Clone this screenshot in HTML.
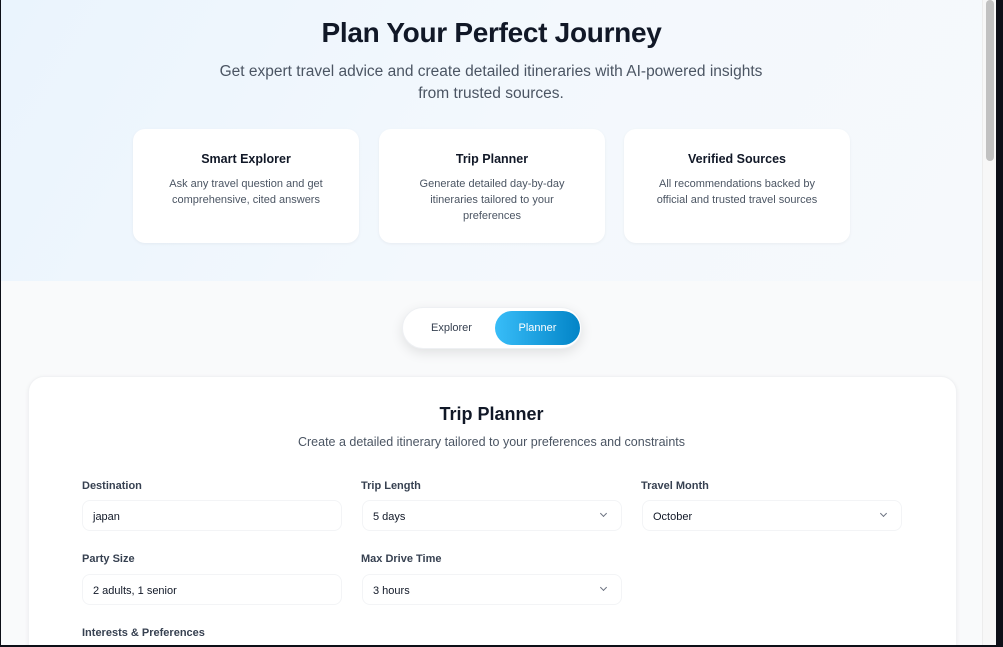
<!DOCTYPE html>
<html><head><style>
*{box-sizing:border-box;margin:0;padding:0}
body{width:1003px;height:647px;overflow:hidden;font-family:"Liberation Sans",sans-serif;background:#0d0f17;position:relative}
.page{position:absolute;left:1px;top:0;width:981px;height:645px;background:#f9fafb;overflow:hidden}
.hero{position:absolute;left:0;top:0;width:981px;height:281px;background:linear-gradient(120deg,#eaf4fd 0%,#f3f8fd 50%,#f6f9fc 100%)}
h1{position:absolute;top:17px;width:981px;text-align:center;font-size:28px;font-weight:700;color:#111827;letter-spacing:-0.3px}
.sub{position:absolute;top:61px;left:205px;width:570px;text-align:center;font-size:15.5px;line-height:22px;color:#4b5563}
.f{position:absolute;top:129px;width:226px;height:114px;background:#fff;border-radius:12px;box-shadow:0 1px 3px rgba(0,0,0,.05);text-align:center}
.f b{display:block;margin-top:23px;font-size:12.5px;color:#111827}
.f p{margin:10px 26px 0;font-size:11px;line-height:16px;color:#4b5563}
.tog{position:absolute;left:401px;top:307px;width:180px;height:42px;background:#fff;border-radius:21px;box-shadow:0 4px 12px rgba(0,0,0,.1);border:1px solid #eef0f3}
.tog span{position:absolute;top:14px;font-size:11px;color:#374151}
.pl{position:absolute;left:92px;top:3px;width:85px;height:34px;border-radius:17px;background:linear-gradient(90deg,#38bdf8,#0284c7);color:#fff;font-size:11px;text-align:center;line-height:35px}
.card{position:absolute;left:27px;top:376px;width:929px;height:300px;background:#fff;border-radius:16px;box-shadow:0 1px 4px rgba(0,0,0,.06);border:1px solid #f1f2f4}
h2{position:absolute;top:404px;width:981px;text-align:center;font-size:18px;font-weight:700;color:#111827}
.cs{position:absolute;top:435px;width:981px;text-align:center;font-size:12.5px;color:#4b5563}
.lb{position:absolute;font-size:11px;font-weight:700;color:#374151}
.in{position:absolute;width:260px;height:31px;border:1px solid #f3f4f6;border-radius:8px;font-size:11px;color:#111827;padding:10px 10px;background:#fff}
.in i{position:absolute;right:15px;top:10px;width:5px;height:5px;border-right:1px solid #6b7280;border-bottom:1px solid #6b7280;transform:rotate(45deg)}
.sb{position:absolute;left:982px;top:0;width:14px;height:645px;background:#f7f7f7;border-left:1px solid #ececec}
.th{position:absolute;left:986px;top:0;width:8px;height:161px;background:#c1c1c1;border-radius:4px}
</style></head><body>
<div class="page">
<div class="hero"></div>
<h1>Plan Your Perfect Journey</h1>
<div class="sub">Get expert travel advice and create detailed itineraries with AI-powered insights from trusted sources.</div>
<div class="f" style="left:132px"><b>Smart Explorer</b><p>Ask any travel question and get comprehensive, cited answers</p></div>
<div class="f" style="left:378px"><b>Trip Planner</b><p>Generate detailed day-by-day itineraries tailored to your preferences</p></div>
<div class="f" style="left:623px"><b>Verified Sources</b><p>All recommendations backed by official and trusted travel sources</p></div>
<div class="tog"><span style="left:28px">Explorer</span><div class="pl">Planner</div></div>
<div class="card"></div>
<h2>Trip Planner</h2>
<div class="cs">Create a detailed itinerary tailored to your preferences and constraints</div>
<div class="lb" style="left:81px;top:480px">Destination</div>
<div class="lb" style="left:360px;top:480px">Trip Length</div>
<div class="lb" style="left:640px;top:480px">Travel Month</div>
<div class="in" style="left:81px;top:500px">japan</div>
<div class="in" style="left:361px;top:500px">5 days<i></i></div>
<div class="in" style="left:641px;top:500px">October<i></i></div>
<div class="lb" style="left:81px;top:553px">Party Size</div>
<div class="lb" style="left:360px;top:553px">Max Drive Time</div>
<div class="in" style="left:81px;top:574px">2 adults, 1 senior</div>
<div class="in" style="left:361px;top:574px">3 hours<i></i></div>
<div class="lb" style="left:81px;top:627px">Interests &amp; Preferences</div>
</div>
<div class="sb"></div><div class="th"></div>
</body></html>
